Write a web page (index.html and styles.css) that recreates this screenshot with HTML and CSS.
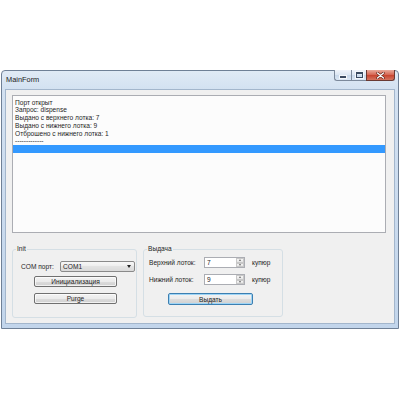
FILE: index.html
```html
<!DOCTYPE html>
<html lang="ru">
<head>
    <meta charset="UTF-8">
    <title>MainForm</title>
    <link rel="stylesheet" href="styles.css">
</head>
<body>
    <div class="window">
        <div class="titlebar">
            <span class="title">MainForm</span>
            <div class="caption-buttons">
                <div class="cap cap-min"><span class="min-glyph"></span></div>
                <div class="cap cap-max"><span class="max-glyph"></span></div>
                <div class="cap cap-close">
                    <svg width="9" height="7" viewBox="0 0 9 7">
                        <path d="M1.5 1 L7.5 6 M7.5 1 L1.5 6" stroke="#5a1e16" stroke-width="2.4" stroke-linecap="round"/>
                        <path d="M1.5 1 L7.5 6 M7.5 1 L1.5 6" stroke="#ffffff" stroke-width="1.3" stroke-linecap="round"/>
                    </svg>
                </div>
            </div>
        </div>

        <div class="client">
            <div class="log">
                <div class="log-line">Порт открыт</div>
                <div class="log-line">Запрос: dispense</div>
                <div class="log-line">Выдано с верхнего лотка: 7</div>
                <div class="log-line">Выдано с нижнего лотка: 9</div>
                <div class="log-line">Отброшено с нижнего лотка: 1</div>
                <div class="log-line">-------------</div>
                <div class="log-line selected"></div>
            </div>

            <div class="groups">
                <fieldset class="group group-init">
                    <legend>Init</legend>
                    <div class="port-row">
                        <span class="port-label">COM порт:</span>
                        <div class="combo">
                            <span>COM1</span>
                            <span class="combo-arrow"></span>
                        </div>
                    </div>
                    <button class="btn btn-init">Инициализация</button>
                    <button class="btn btn-purge">Purge</button>
                </fieldset>

                <fieldset class="group group-dispense">
                    <legend>Выдача</legend>
                    <div class="count-row">
                        <span class="count-label">Верхний лоток:</span>
                        <div class="spin">
                            <span class="spin-value">7</span>
                            <div class="spin-buttons">
                                <span class="spin-btn"><span class="arrow-up"></span></span>
                                <span class="spin-btn"><span class="arrow-down"></span></span>
                            </div>
                        </div>
                        <span class="unit">купюр</span>
                    </div>
                    <div class="count-row second">
                        <span class="count-label">Нижний лоток:</span>
                        <div class="spin">
                            <span class="spin-value">9</span>
                            <div class="spin-buttons">
                                <span class="spin-btn"><span class="arrow-up"></span></span>
                                <span class="spin-btn"><span class="arrow-down"></span></span>
                            </div>
                        </div>
                        <span class="unit">купюр</span>
                    </div>
                    <button class="btn btn-default">Выдать</button>
                </fieldset>
            </div>
        </div>
    </div>
</body>
</html>
```

FILE: styles.css
```css
html, body {
    margin: 0;
    padding: 0;
    background: #fff;
}

body {
    font-family: "Liberation Sans", Arial, sans-serif;
    font-size: 6.6px;
    color: #1e1e1e;
}

.window {
    margin: 70px 0 0 1px;
    width: 398px;
    height: 259px;
    box-sizing: border-box;
    border: 1px solid #6f8096;
    border-radius: 4px 4px 0 0;
    background: linear-gradient(to bottom, #e0eaf5 0, #d3e1f1 18px, #c2d5eb 100%);
    display: flex;
    flex-direction: column;
}

/* title bar */
.titlebar {
    height: 18px;
    display: flex;
    justify-content: space-between;
    align-items: flex-start;
    padding: 0 3px 0 4px;
}

.title {
    margin-top: 4px;
    font-size: 7.4px;
    line-height: 9px;
    color: #1b1b1b;
}

.caption-buttons {
    display: flex;
    height: 11px;
    margin-top: -1px;
}

.cap {
    box-sizing: border-box;
    height: 11px;
    border: 1px solid #7c899b;
    border-top: none;
    display: flex;
    align-items: center;
    justify-content: center;
    background: linear-gradient(to bottom, #f0f4fa 0%, #dde7f3 45%, #c7d7ea 50%, #dce8f5 100%);
}

.cap-min {
    width: 17px;
    border-right: none;
    border-bottom-left-radius: 3px;
}

.cap-max {
    width: 15px;
    border-right: none;
}

.cap-close {
    width: 29px;
    border-color: #6a3a33;
    border-bottom-right-radius: 3px;
    background: linear-gradient(to bottom, #e9aa9b 0%, #d76a57 45%, #c7412c 50%, #d5745f 100%);
}

.min-glyph {
    width: 6px;
    height: 2px;
    margin-top: 3px;
    background: #3a4a60;
    box-shadow: 0 0 0 1px #f4f7fb;
}

.max-glyph {
    width: 5px;
    height: 3px;
    border: 1px solid #3a4a60;
    border-top-width: 2px;
    box-shadow: 0 0 0 1px #f4f7fb;
}

/* client area */
.client {
    flex: 1;
    margin: 0 3px 4px;
    padding: 5px 8px 0 6px;
    background: #f0f0f0;
    border: 1px solid #a3b6cc;
}

.log {
    height: 138px;
    box-sizing: border-box;
    border: 1px solid #abadb3;
    background: #fcfcfc;
    padding-top: 2.5px;
    line-height: 7.8px;
}

.log-line {
    padding-left: 2px;
    height: 7.8px;
    white-space: nowrap;
}

.log-line.selected {
    background: #3399ff;
    height: 8px;
}

.groups {
    display: flex;
    gap: 6px;
    margin-top: 12px;
}

.group {
    margin: 0;
    padding: 0;
    min-width: 0;
    box-sizing: border-box;
    border: 1px solid #d5dfe5;
    border-radius: 3px;
}

.group legend {
    margin-left: 3px;
    padding: 0 1px;
    line-height: 8px;
}

.group-init {
    width: 125px;
    height: 73px;
}

.group-dispense {
    width: 140px;
    height: 72px;
}

.port-row {
    display: flex;
    align-items: center;
    height: 11px;
    margin: 8px 0 0 8px;
}

.port-label {
    width: 39px;
}

.combo {
    width: 75px;
    height: 11px;
    box-sizing: border-box;
    border: 1px solid #8a8a8a;
    border-radius: 2px;
    padding: 0 3px 0 2px;
    display: flex;
    align-items: center;
    justify-content: space-between;
    background: linear-gradient(to bottom, #f7f7f7 0%, #ededed 50%, #e3e3e3 50%, #dadada 100%);
}

.combo-arrow {
    width: 0;
    height: 0;
    border-left: 2.5px solid transparent;
    border-right: 2.5px solid transparent;
    border-top: 3px solid #222;
}

.btn {
    display: block;
    box-sizing: border-box;
    padding: 0;
    font-family: inherit;
    font-size: 6.6px;
    line-height: 9px;
    color: #1e1e1e;
    border: 1px solid #707070;
    border-radius: 2px;
    background: linear-gradient(to bottom, #f3f3f3 0%, #ebebeb 50%, #dddddd 50%, #d0d0d0 100%);
    box-shadow: inset 0 0 0 1px rgba(255, 255, 255, 0.7);
}

.btn-init {
    width: 83px;
    height: 11px;
    margin: 4px 0 0 21px;
}

.btn-purge {
    width: 83px;
    height: 11px;
    margin: 6px 0 0 21px;
}

.btn-default {
    width: 85px;
    height: 12px;
    margin: 8px 0 0 24px;
    border-color: #3c7fb1;
    box-shadow: inset 0 0 0 1px #9fd5f6;
}

.count-row {
    display: flex;
    align-items: center;
    height: 11px;
    margin: 4px 0 0 5px;
}

.count-row.second {
    margin-top: 6px;
}

.count-label {
    width: 55px;
}

.spin {
    width: 41px;
    height: 11px;
    box-sizing: border-box;
    border: 1px solid #abadb3;
    background: #fff;
    display: flex;
    align-items: center;
    justify-content: space-between;
}

.spin-value {
    padding-left: 2px;
}

.spin-buttons {
    width: 8px;
    height: 9px;
    display: flex;
    flex-direction: column;
}

.spin-btn {
    flex: 1;
    display: flex;
    align-items: center;
    justify-content: center;
    background: linear-gradient(to bottom, #f7f7f7, #e4e4e4);
    border: 0.5px solid #c8c8c8;
}

.arrow-up {
    width: 0;
    height: 0;
    border-left: 1.5px solid transparent;
    border-right: 1.5px solid transparent;
    border-bottom: 2px solid #6a6a6a;
}

.arrow-down {
    width: 0;
    height: 0;
    border-left: 1.5px solid transparent;
    border-right: 1.5px solid transparent;
    border-top: 2px solid #6a6a6a;
}

.unit {
    margin-left: 7px;
}
```
